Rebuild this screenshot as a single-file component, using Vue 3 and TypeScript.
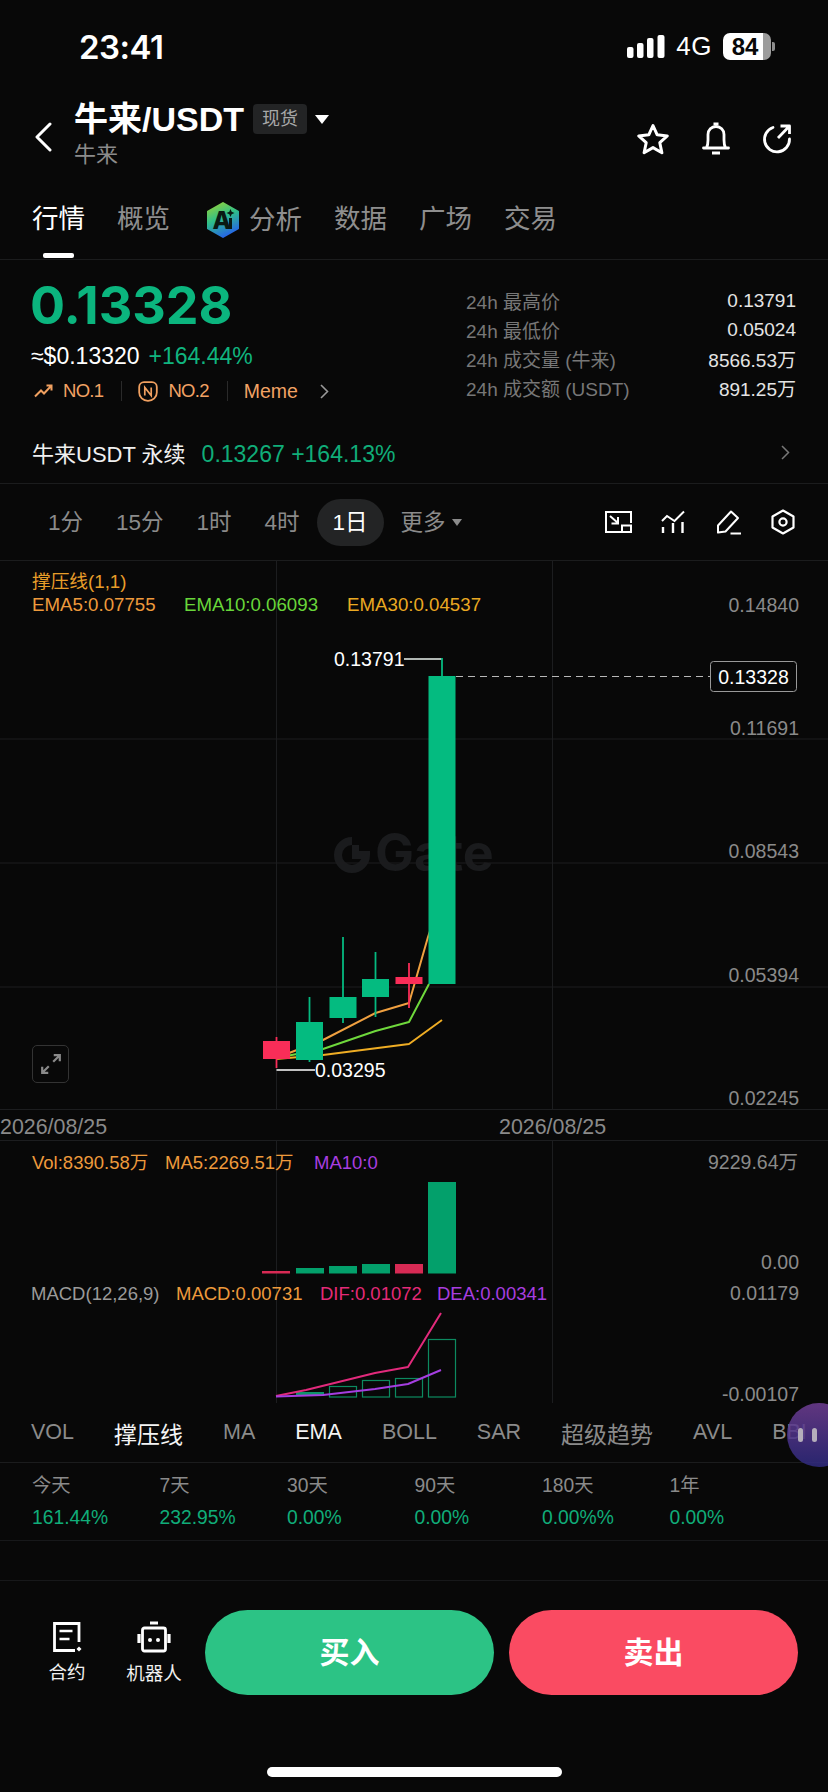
<script setup lang="ts">
interface Candle { x: number; w1: number; w2: number; b1: number; b2: number; up: boolean }
const candles: Candle[] = [
  { x: 276.5, w1: 1037, w2: 1068, b1: 1041, b2: 1059, up: false },
  { x: 309.5, w1: 997, w2: 1062, b1: 1022, b2: 1060, up: true },
  { x: 343, w1: 937, w2: 1023, b1: 997, b2: 1018, up: true },
  { x: 375.5, w1: 952, w2: 1017, b1: 979, b2: 997, up: true },
  { x: 409, w1: 963, w2: 1008, b1: 977, b2: 984, up: false },
  { x: 442, w1: 658, w2: 676, b1: 676, b2: 984, up: true },
]
const gridY = [739, 863, 987]
const axis = [
  { t: '0.14840', y: 605 },
  { t: '0.11691', y: 728 },
  { t: '0.08543', y: 851 },
  { t: '0.05394', y: 975 },
  { t: '0.02245', y: 1098 },
]
const volBars = [
  { x: 262, y: 1271, h: 2.5, up: false },
  { x: 296, y: 1268, h: 5.5, up: true },
  { x: 329, y: 1266, h: 7.5, up: true },
  { x: 362, y: 1264, h: 9.5, up: true },
  { x: 395, y: 1264, h: 9.5, up: false },
  { x: 428, y: 1182, h: 91.5, up: true },
]
const macdBars = [
  { x: 329, y: 1386, h: 10.5 },
  { x: 362, y: 1380, h: 16.5 },
  { x: 395, y: 1378, h: 18.5 },
  { x: 428, y: 1339, h: 57.5 },
]
const tabs = ['概览']
const tabsAfter = ['数据', '广场', '交易']
const stats = [
  { k: '24h 最高价', v: '0.13791' },
  { k: '24h 最低价', v: '0.05024' },
  { k: '24h 成交量 (牛来)', v: '8566.53万' },
  { k: '24h 成交额 (USDT)', v: '891.25万' },
]
const frames = ['1分', '15分', '1时', '4时']
const indicators = [
  { t: 'VOL', on: false, cjk: false }, { t: '撑压线', on: true, cjk: true }, { t: 'MA', on: false, cjk: false },
  { t: 'EMA', on: true, cjk: false }, { t: 'BOLL', on: false, cjk: false }, { t: 'SAR', on: false, cjk: false },
  { t: '超级趋势', on: false, cjk: true }, { t: 'AVL', on: false, cjk: false }, { t: 'BBI', on: false, cjk: false },
]
const perf = [
  { k: '今天', v: '161.44%' }, { k: '7天', v: '232.95%' }, { k: '30天', v: '0.00%' },
  { k: '90天', v: '0.00%' }, { k: '180天', v: '0.00%%' }, { k: '1年', v: '0.00%' },
]
</script>

<template>
  <div class="page">
    <div class="status">
      <span class="clock">23:41</span>
      <div class="status-right">
        <svg class="signal" width="38" height="23" viewBox="0 0 38 23">
          <rect x="0" y="12" width="6.500" height="11" rx="2" fill="#fff" />
          <rect x="10" y="8" width="6.500" height="15" rx="2" fill="#fff" />
          <rect x="20" y="3" width="6.500" height="20" rx="2" fill="#fff" />
          <rect x="30.500" y="0" width="7" height="23" rx="2" fill="#fff" />
        </svg>
        <span class="net">4G</span>
        <div class="battery">84</div>
        <span class="nub"></span>
      </div>
    </div>

    <div class="head">
      <svg class="back" width="18" height="30" viewBox="0 0 18 30">
        <path d="M16 2 3 15l13 13" fill="none" stroke="#fff" stroke-width="3" stroke-linecap="round" stroke-linejoin="round" />
      </svg>
      <div class="head-title">
        <div class="title-row">
          <span class="pair">牛来/USDT</span>
          <span class="tag">现货</span>
          <span class="tri"></span>
        </div>
        <div class="sub">牛来</div>
      </div>
      <div class="head-icons">
        <svg width="34" height="32" viewBox="0 0 34 32">
          <path d="M17 2.500l4.200 9.300 10.100 1.100-7.500 6.800 2.100 10-8.900-5.100-8.900 5.100 2.100-10-7.500-6.800 10.100-1.100z" fill="none" stroke="#fff" stroke-width="3" stroke-linejoin="round" />
        </svg>
        <svg width="28" height="33" viewBox="0 0 28 33">
          <path d="M1.500 26h25M4.500 26c1-2 1.500-5 1.500-8v-5.500c0-4.500 3.500-8 8-8s8 3.500 8 8V18c0 3 .5 6 1.500 8" fill="none" stroke="#fff" stroke-width="2.800" stroke-linecap="round" stroke-linejoin="round" />
          <path d="M11.500 2h5M10 31h8" stroke="#fff" stroke-width="2.800" />
        </svg>
        <svg width="30" height="30" viewBox="0 0 30 30">
          <path d="M11 3.500A12.500 12.500 0 1 0 27.500 15" fill="none" stroke="#fff" stroke-width="2.800" stroke-linecap="round" />
          <path d="M16 14 27 2.500M18.500 2h9v8" fill="none" stroke="#fff" stroke-width="2.800" stroke-linejoin="round" />
        </svg>
      </div>
    </div>

    <div class="tabs">
      <span class="tab active">行情</span>
      <span v-for="t in tabs" :key="t" class="tab">{{ t }}</span>
      <span class="tab ai">
        <svg width="34" height="36" viewBox="0 0 34 36">
          <defs>
            <linearGradient id="aiGrad" x1="0.2" y1="0" x2="0.6" y2="1">
              <stop offset="0" stop-color="#8ed13c" />
              <stop offset="0.45" stop-color="#2fbf8a" />
              <stop offset="1" stop-color="#2563eb" />
            </linearGradient>
          </defs>
          <path d="M17 1 32 9.500v17L17 35 2 26.500v-17z" fill="url(#aiGrad)" stroke="url(#aiGrad)" stroke-width="2" stroke-linejoin="round" />
          <text x="6.500" y="27" class="ai-mark">A</text>
          <rect x="23" y="16" width="3" height="11" fill="#0a1a14" />
          <path d="M24.500 7l1.200 2.800 2.800 1.200-2.800 1.200-1.200 2.800-1.200-2.800-2.800-1.200 2.800-1.200z" fill="#0a1a14" />
        </svg>
        分析
      </span>
      <span v-for="t in tabsAfter" :key="t" class="tab">{{ t }}</span>
    </div>

    <div class="market">
      <div class="market-left">
        <div class="price">0.13328</div>
        <div class="price-sub"><span>≈$0.13320</span><span class="up">+164.44%</span></div>
        <div class="rank">
          <svg width="19" height="14" viewBox="0 0 19 14">
            <path d="M1 12.500 7 6.500l3 3 7.500-8M12.500 1.500h5v5" fill="none" stroke="#f0a060" stroke-width="2" />
          </svg>
          <span class="rank-text no">NO.1</span>
          <i class="rank-sep"></i>
          <svg width="20" height="21" viewBox="0 0 20 21">
            <path d="M6 1.200h8c2.700 0 4.800 2 4.800 4.800v5.500c0 4.800-3.800 8.300-8.800 8.300s-8.800-3.500-8.800-8.300V6C1.200 3.200 3.300 1.200 6 1.200z" fill="none" stroke="#f0a060" stroke-width="1.800" />
            <path d="M6.800 14.500v-8l6.400 8v-8" fill="none" stroke="#f0a060" stroke-width="1.700" />
          </svg>
          <span class="rank-text no">NO.2</span>
          <i class="rank-sep"></i>
          <span class="rank-text meme">Meme</span>
          <svg class="rank-more" width="9" height="15" viewBox="0 0 9 15">
            <path d="M1 1l6.500 6.500L1 14" fill="none" stroke="#999" stroke-width="1.600" />
          </svg>
        </div>
      </div>
      <div class="market-right">
        <div v-for="s in stats" :key="s.k" class="stat">
          <span class="stat-k">{{ s.k }}</span>
          <span class="stat-v">{{ s.v }}</span>
        </div>
      </div>
    </div>

    <div class="perp">
      <span class="perp-name">牛来USDT 永续</span>
      <span class="perp-val">0.13267 +164.13%</span>
      <svg class="perp-more" width="9" height="15" viewBox="0 0 9 15">
        <path d="M1 1l6.500 6.500L1 14" fill="none" stroke="#777" stroke-width="1.500" />
      </svg>
    </div>

    <div class="frames">
      <span v-for="f in frames" :key="f" class="frame">{{ f }}</span>
      <span class="frame on">1日</span>
      <span class="frame more">更多<i class="more-tri"></i></span>
      <div class="tools">
        <svg width="28" height="24" viewBox="0 0 28 24">
          <path d="M17 22H2V2h25v11" fill="none" stroke="#fff" stroke-width="2" />
          <rect x="18" y="15.500" width="9" height="6.500" fill="none" stroke="#fff" stroke-width="2" />
          <path d="M6 6l8 7M14 7v6.500H7.500" fill="none" stroke="#fff" stroke-width="2" />
        </svg>
        <svg width="26" height="24" viewBox="0 0 26 24">
          <path d="M1 11 6 6l7.500 5L23 1.500" fill="none" stroke="#fff" stroke-width="2" />
          <path d="M2 17v6M12 13v10M21.500 12v11" stroke="#fff" stroke-width="2.400" />
        </svg>
        <svg width="26" height="26" viewBox="0 0 26 26">
          <path d="M2 23.500V16.500L15 2.500 22 9 9.500 22.500 2 23.500z" fill="none" stroke="#fff" stroke-width="2" stroke-linejoin="round" />
          <path d="M14.500 24.500H25" stroke="#fff" stroke-width="2" />
        </svg>
        <svg width="24" height="26" viewBox="0 0 24 26">
          <path d="M12 1.500 22.500 7.500v11L12 24.500 1.500 18.500v-11z" fill="none" stroke="#fff" stroke-width="2.200" stroke-linejoin="round" />
          <circle cx="12" cy="13" r="3.600" fill="none" stroke="#fff" stroke-width="2.200" />
        </svg>
      </div>
    </div>

    <div class="charts">
      <!-- candle chart -->
      <div class="pane pane-main">
        <svg class="plot" width="828" height="549" viewBox="0 561 828 549">
          <path d="M352 841A14 14 0 1 0 366 855H352" fill="none" stroke="#1a1b1d" stroke-width="8" />
          <rect x="352" y="845" width="7" height="7" fill="#1a1b1d" />
          <text x="375" y="871" class="wm">Gate</text>
          <line v-for="y in gridY" :key="y" x1="0" x2="828" :y1="y" :y2="y" class="grid" />
          <line x1="276.500" x2="276.500" y1="561" y2="1110" class="grid" />
          <line x1="552.500" x2="552.500" y1="561" y2="1110" class="grid" />
          <line x1="0" x2="828" y1="1109.500" y2="1109.500" class="grid" />

          <polyline points="276,1058 323,1040 375.500,1013 409,1003 428,937 442,895" class="ln" stroke="#f0a040" />
          <polyline points="276,1058 323,1049 375.500,1031 409,1022 429,984" class="ln" stroke="#6fd83c" />
          <polyline points="276,1059 323,1055 409,1044 442,1020" class="ln" stroke="#efad24" />

          <path d="M404 659h38" stroke="#e8f2ec" stroke-width="1.500" fill="none" />
          <path d="M276.500 1070H315" stroke="#fff" stroke-width="1.500" fill="none" />
          <g v-for="c in candles" :key="c.x">
            <line :x1="c.x" :x2="c.x" :y1="c.w1" :y2="c.w2" :stroke="c.up ? '#05ba80' : '#f92d58'" stroke-width="1.800" />
            <rect :x="c.x - 13.500" :y="c.b1" width="27" :height="c.b2 - c.b1" :fill="c.up ? '#04bb80' : '#f92d58'" />
          </g>
          <text x="334" y="659" class="t-white">0.13791</text>
          <text x="315" y="1070" class="t-white">0.03295</text>
          <line x1="456" x2="710" y1="676.500" y2="676.500" stroke="#b8b8b8" stroke-width="1" stroke-dasharray="7 5" />
          <rect x="710.500" y="661.500" width="86" height="30" rx="3" fill="#080808" stroke="#999" />
          <text x="753.500" y="677" text-anchor="middle" class="t-white">0.13328</text>

          <text v-for="a in axis" :key="a.t" x="799" :y="a.y" text-anchor="end" class="t-axis">{{ a.t }}</text>

          <text x="32" y="581" class="t-leg" fill="#e89e2a">撑压线(1,1)</text>
          <text x="32" y="604" class="t-leg" fill="#ee9a3c">EMA5:0.07755</text>
          <text x="184" y="604" class="t-leg" fill="#68d63a">EMA10:0.06093</text>
          <text x="347" y="604" class="t-leg" fill="#eba922">EMA30:0.04537</text>
        </svg>
        <button class="expand" type="button" aria-label="expand">
          <svg width="22" height="22" viewBox="0 0 20 20">
            <path d="M12 8l6-6M12.500 2H18v5.500M8 12l-6 6M7.500 18H2v-5.500" fill="none" stroke="#8a8a8a" stroke-width="2" />
          </svg>
        </button>
      </div>

      <!-- date axis -->
      <div class="dates">
        <span class="date-a">2026/08/25</span>
        <span class="date-b">2026/08/25</span>
      </div>

      <!-- volume & macd -->
      <div class="pane pane-sub">
        <svg class="plot" width="828" height="262" viewBox="0 1141 828 262">
          <line x1="276.500" x2="276.500" y1="1141" y2="1403" class="grid" />
          <line x1="552.500" x2="552.500" y1="1141" y2="1403" class="grid" />

          <text x="32" y="1162" class="t-leg2" fill="#ee9a3c">Vol:8390.58万</text>
          <text x="165" y="1162" class="t-leg2" fill="#ee9a3c">MA5:2269.51万</text>
          <text x="314" y="1162" class="t-leg2" fill="#a83ee0">MA10:0</text>
          <text x="798" y="1162" text-anchor="end" class="t-axis">9229.64万</text>
          <rect v-for="b in volBars" :key="b.x" :x="b.x" :y="b.y" width="28" :height="b.h" :fill="b.up ? '#03a06b' : '#d72a54'" />
          <text x="799" y="1262" text-anchor="end" class="t-axis">0.00</text>

          <text x="31" y="1293" class="t-leg2" fill="#9a9a9a">MACD(12,26,9)</text>
          <text x="176" y="1293" class="t-leg2" fill="#ee9a3c">MACD:0.00731</text>
          <text x="320" y="1293" class="t-leg2" fill="#e52a78">DIF:0.01072</text>
          <text x="437" y="1293" class="t-leg2" fill="#a83ee0">DEA:0.00341</text>
          <text x="799" y="1293" text-anchor="end" class="t-axis">0.01179</text>
          <text x="799" y="1394" text-anchor="end" class="t-axis">-0.00107</text>

          <rect x="296" y="1392" width="28" height="4" fill="#0d9468" />
          <rect v-for="b in macdBars" :key="b.x" :x="b.x + 0.5" :y="b.y + 0.5" width="27" :height="b.h" fill="none" stroke="#0c8a60" stroke-width="1.200" />
          <polyline points="276,1396 306,1390 375,1373 408,1367 441,1313" class="ln" stroke="#e22a7c" />
          <polyline points="276,1396.500 323,1395 375,1389 408,1384 441,1370" class="ln" stroke="#a53ee0" />
        </svg>
      </div>
    </div>

    <div class="indicators">
      <span v-for="i in indicators" :key="i.t" class="ind" :class="{ on: i.on, cjk: i.cjk }">{{ i.t }}</span>
    </div>

    <div class="perf">
      <div v-for="p in perf" :key="p.k" class="perf-col">
        <span class="perf-k">{{ p.k }}</span>
        <span class="perf-v">{{ p.v }}</span>
      </div>
    </div>

    <div class="empty"></div>

    <div class="actions">
      <div class="act">
        <svg width="30" height="32" viewBox="0 0 30 32">
          <path d="M27 21V2.500H2.500v27H23" fill="none" stroke="#fff" stroke-width="2.800" />
          <path d="M7.500 10h13M7.500 18h10" stroke="#fff" stroke-width="2.400" />
          <path d="M27 25.500l2.500 2.500-2.500 2.500-2.500-2.500z" fill="#fff" />
        </svg>
        <span>合约</span>
      </div>
      <div class="act act-bot">
        <svg width="34" height="33" viewBox="0 0 34 33">
          <rect x="5.500" y="7" width="23" height="23" rx="2" fill="none" stroke="#fff" stroke-width="2.800" />
          <path d="M13 2h8" stroke="#fff" stroke-width="3" />
          <path d="M2 13v9M32 13v9" stroke="#fff" stroke-width="3.200" />
          <circle cx="13" cy="19" r="2" fill="#fff" />
          <circle cx="21" cy="19" r="2" fill="#fff" />
        </svg>
        <span>机器人</span>
      </div>
      <button class="trade buy" type="button">买入</button>
      <button class="trade sell" type="button">卖出</button>
    </div>

    <div class="home-wrap"><div class="home"></div></div>

    <div class="bubble"><i></i><i></i></div>
  </div>
</template>

<style>
html, body { margin: 0; background: #080808; }
</style>

<style scoped>
.page {
  position: relative;
  width: 828px;
  height: 1792px;
  overflow: hidden;
  display: flex;
  flex-direction: column;
  background: #080808;
  color: #fff;
  font-family: "Liberation Sans", "Noto Sans CJK SC", sans-serif;
}
i { font-style: normal; }
svg { display: block; flex: none; }

/* status bar */
.status { height: 84px; display: flex; align-items: flex-start; justify-content: space-between; padding: 0 53px 0 79px; box-sizing: border-box; }
.clock { margin-top: 28px; font: 600 33px/38px Inter, sans-serif; letter-spacing: -0.5px; }
.status-right { display: flex; align-items: center; margin-top: 33px; height: 27px; }
.net { margin-left: 11px; font: 500 26px/27px "Liberation Sans", sans-serif; letter-spacing: .5px; }
.battery {
  margin-left: 11px; width: 48px; height: 27px; border-radius: 7px; box-sizing: border-box;
  background: linear-gradient(90deg, #fff 84%, #9c9c9c 84%);
  color: #080808; font: 700 24px/27px "Liberation Sans", sans-serif; text-align: center; padding-right: 4px;
}
.nub { width: 3px; height: 9px; margin-left: 1px; background: #8e8e8e; border-radius: 0 2px 2px 0; }

/* header */
.head { height: 88px; display: flex; box-sizing: border-box; padding-left: 34px; position: relative; }
.back { margin-top: 38px; }
.head-title { margin-left: 22px; padding-top: 18px; }
.title-row { display: flex; align-items: center; height: 34px; }
.pair { font-size: 34px; line-height: 34px; font-weight: 700; }
.tag { margin-left: 9px; width: 54px; height: 30px; line-height: 30px; text-align: center; background: #232425; color: #a8a8a8; font-size: 18px; border-radius: 4px; }
.tri { margin-left: 8px; width: 0; height: 0; border-left: 7.5px solid transparent; border-right: 7.5px solid transparent; border-top: 9px solid #fff; }
.sub { margin-top: 6px; font-size: 22px; line-height: 26px; color: #8b8b8b; }
.head-icons { margin-left: auto; margin-top: 38px; display: flex; gap: 32px; padding-right: 36px; align-items: center; height: 33px; }

/* tabs */
.tabs { height: 88px; box-sizing: border-box; display: flex; align-items: flex-start; gap: 32px; padding: 30px 0 0 32px; border-bottom: 1px solid #1b1c1d; }
.tab { position: relative; font-size: 26.500px; line-height: 34px; color: #8e8e8e; white-space: nowrap; }
.tab.active { color: #fff; }
.tab.active::after { content: ""; position: absolute; left: 11px; top: 51px; width: 31px; height: 5px; background: #fff; border-radius: 2px; }
.tab.ai { display: flex; align-items: center; gap: 9px; margin-left: 4px; }
.ai-mark { font: 800 24px Inter, sans-serif; fill: #0a1a14; }

/* market */
.market { height: 160px; display: flex; box-sizing: border-box; }
.market-left { width: 466px; padding: 18px 0 0 30px; box-sizing: border-box; }
.price { font: 700 52px/56px Inter, sans-serif; color: #0bb57e; }
.price-sub { margin-top: 9px; padding-left: 1px; display: flex; gap: 9px; font-size: 23px; line-height: 26px; }
.up { color: #10b47f; }
.rank { margin-top: 10px; display: flex; align-items: center; height: 24px; padding-left: 4px; }
.rank-text { font-size: 18.500px; color: #f2a264; margin-left: 10px; line-height: 24px; }
.rank-text.no { letter-spacing: -0.7px; }
.rank-text.meme { font-size: 19.500px; }
.rank-sep { width: 1px; height: 20px; background: #2a2a2a; margin: 0 16px 0 18px; }
.rank-sep + .rank-text { margin-left: 0; }
.rank-more { margin-left: 22px; }
.market-right { flex: 1; padding: 26px 32px 0 0; display: flex; flex-direction: column; }
.stat { height: 29px; display: flex; align-items: center; justify-content: space-between; font-size: 19px; }
.stat-k { color: #777; }
.stat-v { color: #e4e4e4; }

/* perp */
.perp { height: 64px; display: flex; align-items: baseline; padding: 16px 38px 0 32px; box-sizing: border-box; border-bottom: 1px solid #1b1c1d; }
.perp-name { font-size: 22px; color: #f0f0f0; }
.perp-val { margin-left: 16px; font-size: 23px; color: #10ad79; }
.perp-more { margin-left: auto; align-self: flex-start; margin-top: 9px; }

/* time frames */
.frames { height: 77px; display: flex; align-items: center; padding: 0 33px 0 32px; box-sizing: border-box; gap: 1px; border-bottom: 1px solid #1b1c1d; }
.frame { padding: 0 16px; height: 47px; line-height: 47px; font-size: 22.500px; color: #8b8b8b; border-radius: 24px; white-space: nowrap; }
.frame.on { background: #232425; color: #fff; }
.frame.more { display: flex; align-items: center; padding-right: 0; }
.more-tri { margin-left: 6px; width: 0; height: 0; border-left: 5px solid transparent; border-right: 5px solid transparent; border-top: 7px solid #8b8b8b; }
.tools { margin-left: auto; display: flex; align-items: center; gap: 29px; }

/* charts */
.charts { display: flex; flex-direction: column; height: 842px; }
.pane { position: relative; }
.pane-main { height: 549px; }
.pane-sub { height: 262px; }
.plot { display: block; }
.grid { stroke: #1c1d1f; stroke-width: 1; }
.ln { fill: none; stroke-width: 2; stroke-linejoin: round; }
.wm { font: 700 52px Inter, sans-serif; fill: #1a1b1d; }
.t-white, .t-axis, .t-leg, .t-leg2 { dominant-baseline: central; font-family: "Liberation Sans", "Noto Sans CJK SC", sans-serif; }
.t-white { font-size: 19.500px; fill: #fff; }
.t-axis { font-size: 19.500px; fill: #8a8a8a; }
.t-leg { font-size: 18.700px; }
.t-leg2 { font-size: 18.500px; }
.expand { position: absolute; left: 32px; top: 484px; width: 37px; height: 38px; box-sizing: border-box; padding: 0; background: transparent; border: 1px solid #333; border-radius: 5px; display: flex; align-items: center; justify-content: center; }
.dates { height: 31px; border-bottom: 1px solid #1c1d1f; position: relative; display: flex; font-size: 21.400px; line-height: 34px; color: #8a8a8a; box-sizing: border-box; }
.date-a { width: 499px; }

/* indicators */
.indicators { height: 60px; display: flex; align-items: center; gap: 40px; padding: 0 0 0 31px; box-sizing: border-box; border-bottom: 1px solid #1b1c1d; white-space: nowrap; font-size: 21.500px; color: #8b8b8b; }
.ind.cjk { font-size: 23px; }
.ind.on { color: #f4f4f4; }

/* perf */
.perf { height: 78px; display: flex; padding: 11px 0 0 32px; box-sizing: border-box; border-bottom: 1px solid #17181a; }
.perf-col { width: 127.500px; display: flex; flex-direction: column; gap: 8px; font-size: 19.300px; line-height: 24px; }
.perf-k { color: #8a8a8a; }
.perf-v { color: #10ad79; }
.empty { height: 40px; border-bottom: 1px solid #17181a; box-sizing: border-box; }

/* actions */
.actions { height: 130px; display: flex; align-items: flex-start; padding-top: 29px; box-sizing: border-box; }
.act { position: relative; margin-left: 48px; width: 38px; display: flex; flex-direction: column; align-items: center; padding-top: 11px; font-size: 18.500px; color: #f0f0f0; white-space: nowrap; }
.act span { margin-top: 8px; line-height: 24px; }
.act-bot { margin-left: 39px; width: 58px; margin-right: 22px; }
.trade { height: 85px; width: 289px; border: 0; border-radius: 43px; color: #fff; font: 700 30px/85px "Liberation Sans", "Noto Sans CJK SC", sans-serif; padding: 0; }
.buy { background: #2cc385; }
.sell { background: #fa4b62; margin-left: 15px; }

.home-wrap { flex: 1; display: flex; justify-content: center; padding-top: 56px; box-sizing: border-box; }
.home { width: 295px; height: 10px; border-radius: 5px; background: #fff; }

.bubble {
  position: absolute; left: 787px; top: 1403px; width: 64px; height: 64px; border-radius: 50%;
  background: linear-gradient(180deg, rgba(112, 62, 148, .85) 0%, rgba(46, 42, 128, .85) 100%);
  display: flex; align-items: center; gap: 9px; padding-left: 11px; box-sizing: border-box;
}
.bubble i { width: 5px; height: 14px; border-radius: 2.500px; background: #b5aebb; }
</style>
